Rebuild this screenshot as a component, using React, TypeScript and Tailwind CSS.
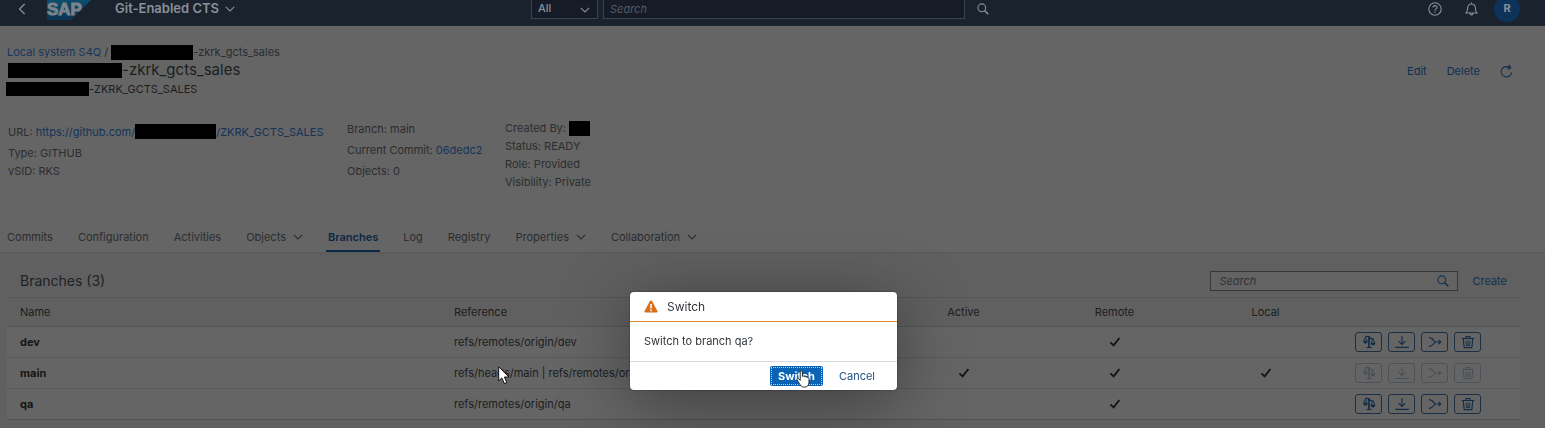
import type { ReactNode } from "react";

function Chevron({ className = "" }: { className?: string }) {
  return (
    <svg width="10" height="6" viewBox="0 0 10 6" fill="none" stroke="currentColor" className={className} aria-hidden="true">
      <path d="M0.8 0.8 L5 5 L9.2 0.8" strokeWidth="1.1" />
    </svg>
  );
}

function SearchIcon() {
  return (
    <svg width="12" height="12" viewBox="0 0 12 12" fill="none" stroke="currentColor" aria-hidden="true">
      <circle cx="4.8" cy="4.8" r="3.9" strokeWidth="1.1" />
      <path d="M7.7 7.7 L11.3 11.2" strokeWidth="1.6" />
    </svg>
  );
}

function SapLogo() {
  return (
    <svg width="47" height="23" viewBox="0 0 47 23" role="img" aria-label="SAP">
      <defs>
        <linearGradient id="sap" x1="0" y1="0" x2="0" y2="1">
          <stop offset="0" stopColor="#0e5070" />
          <stop offset="1" stopColor="#0c3354" />
        </linearGradient>
      </defs>
      <path d="M0 0 H47 L24 23 H0 Z" fill="url(#sap)" />
      <text x="0" y="18" fontFamily="Liberation Sans, sans-serif" fontWeight="700" fontSize="17" fill="#7b838b" stroke="#7b838b" strokeWidth="1">
        SAP
      </text>
    </svg>
  );
}

function Check() {
  return (
    <svg width="12" height="10" viewBox="0 0 12 10" fill="none" stroke="#141516" className="mx-auto" role="img" aria-label="Yes">
      <path d="M1.4 5.4 L4.6 8.4 L10.4 1" strokeWidth="1.9" />
    </svg>
  );
}

function CompareIcon() {
  return (
    <svg width="14" height="14" viewBox="0 0 14 14" fill="none" stroke="currentColor" aria-hidden="true">
      <path d="M7 1 V12.5" strokeWidth="1.7" />
      <path d="M4.6 12.6 H9.8" />
      <path d="M3.2 2 C5 0.8 6.2 1.6 7 2.4 C8 3.6 9.6 3.9 11 3.4" strokeWidth="1.2" />
      <path d="M3.4 2.4 L1.6 6.2 H5.2 Z M11 3.8 L9.2 8 H12.8 Z" strokeWidth="0.9" />
      <path d="M1.2 6.2 V7 Q1.6 8.6 3.4 8.6 Q5.2 8.6 5.6 7 V6.2 Z M8.8 8 V8.8 Q9.2 10.4 11 10.4 Q12.8 10.4 13.2 8.8 V8 Z" fill="currentColor" stroke="none" />
    </svg>
  );
}

function DownloadIcon() {
  return (
    <svg width="14" height="14" viewBox="0 0 14 14" fill="none" stroke="currentColor" aria-hidden="true">
      <path d="M7 1 V9.4 M3.7 6.2 L7 9.5 L10.3 6.2" strokeWidth="1.1" />
      <path d="M0.2 12.4 H13.8" strokeWidth="1.3" />
    </svg>
  );
}

function MergeIcon() {
  return (
    <svg width="14" height="14" viewBox="0 0 14 14" fill="none" stroke="currentColor" strokeWidth="1.1" aria-hidden="true">
      <path d="M1 2.6 C3.4 2.8 5.4 4.6 7 7 C5.4 9.4 3.4 11.2 1 11.4 M7 7 H12.8 M10.6 4.8 L12.9 7 L10.6 9.2" />
    </svg>
  );
}

function TrashIcon() {
  return (
    <svg width="14" height="14" viewBox="0 0 14 14" fill="none" stroke="currentColor" aria-hidden="true">
      <path d="M0.9 3.5 H13.1 M5 3.2 V1.5 H9 V3.2" strokeWidth="1.1" />
      <path d="M2.2 3.8 L3.2 12.6 H10.8 L11.8 3.8" strokeWidth="1.1" />
      <path d="M5 5.6 L5.4 10.6 H8.6 L9 5.6 M7 5.4 V10.6" strokeWidth="0.9" />
    </svg>
  );
}

function Redacted({ className }: { className: string }) {
  return <span aria-hidden="true" className={`inline-block shrink-0 bg-black ${className}`} />;
}

const tabs = [
  { label: "Commits" },
  { label: "Configuration" },
  { label: "Activities" },
  { label: "Objects", menu: true },
  { label: "Branches", active: true },
  { label: "Log" },
  { label: "Registry" },
  { label: "Properties", menu: true },
  { label: "Collaboration", menu: true },
];

const branches = [
  { name: "dev", reference: "refs/remotes/origin/dev", active: false, remote: true, local: false },
  { name: "main", reference: "refs/heads/main | refs/remotes/origin/main", active: true, remote: true, local: true },
  { name: "qa", reference: "refs/remotes/origin/qa", active: false, remote: true, local: false },
];

const actions: { label: string; icon: ReactNode }[] = [
  { label: "Compare", icon: <CompareIcon /> },
  { label: "Pull", icon: <DownloadIcon /> },
  { label: "Merge", icon: <MergeIcon /> },
  { label: "Delete branch", icon: <TrashIcon /> },
];

function ShellBar() {
  return (
    <header className="-mt-[9px] flex h-[35px] items-center bg-[#19222d] text-[#8a9097]">
      <div className="flex flex-1 items-center">
        <button type="button" aria-label="Back" className="ml-[18px] mr-[21px]">
          <svg width="8" height="12" viewBox="0 0 8 12" fill="none" stroke="currentColor" strokeWidth="1.3">
            <path d="M6.6 1 L1.6 6 L6.6 11" />
          </svg>
        </button>
        <SapLogo />
        <button type="button" className="ml-[21px] flex items-center gap-[6px] text-[13px] font-semibold">
          Git-Enabled CTS
          <Chevron />
        </button>
      </div>
      <div className="flex w-[458px] items-center">
        <div className="relative mr-[5px] w-[67px]">
          <select aria-label="Search scope" className="h-5 w-full appearance-none border border-[#3a444f] bg-[#151c27] pl-[6px] text-[11px] font-medium">
            <option>All</option>
          </select>
          <Chevron className="pointer-events-none absolute right-2 top-2" />
        </div>
        <input
          aria-label="Search"
          placeholder="Search"
          className="h-5 w-[362px] border border-[#3a444f] bg-[#151c27] px-[6px] text-[11px] italic placeholder:text-[#525a64]"
        />
        <button type="button" aria-label="Run search" className="ml-3">
          <SearchIcon />
        </button>
      </div>
      <div className="flex flex-1 items-center justify-end pr-[25px]">
        <button type="button" aria-label="Help" className="mr-[23px]">
          <svg width="14" height="14" viewBox="0 0 14 14" fill="none" stroke="currentColor" strokeWidth="1.1">
            <circle cx="7" cy="7" r="6.2" />
            <path d="M5 5.6 C5 3 9 3 9 5.4 C9 7 7 6.8 7 8.5 M7 9.6 V10.8" />
          </svg>
        </button>
        <button type="button" aria-label="Notifications" className="mr-4">
          <svg width="13" height="14" viewBox="0 0 13 14" fill="none" stroke="currentColor" strokeWidth="1.1">
            <path d="M6.5 0.5 V2 M1 11 H12 C10.6 9.8 10.4 8.8 10.4 6.2 C10.4 3.4 8.8 2 6.5 2 C4.2 2 2.6 3.4 2.6 6.2 C2.6 8.8 2.4 9.8 1 11 Z M5 11.4 C5.2 13.4 7.8 13.4 8 11.4" />
          </svg>
        </button>
        <button type="button" className="size-[26px] rounded-full bg-[#0e335b] text-[11px] font-bold">R</button>
      </div>
    </header>
  );
}

function ObjectHeader() {
  return (
    <section className="border-b-2 border-[#5c5c5c] bg-[#656565]">
      <div className="flex justify-between pt-[18px]">
        <div>
          <nav aria-label="Breadcrumb" className="flex h-4 items-center pl-[7px]">
            <a href="#system" className="text-[#17375a]">Local system S4Q</a>
            <span className="mx-[3px]">/</span>
            <Redacted className="h-[15px] w-[82px]" />
            <span>-zkrk_gcts_sales</span>
          </nav>
          <h1 className="flex h-5 items-center pl-2 text-[15px] text-[#1b1d1f]">
            <Redacted className="h-[15px] w-[114px]" />
            -zkrk_gcts_sales
          </h1>
          <p className="flex h-[18px] items-center pl-[6px] text-[#1b1d1f]">
            <Redacted className="h-[14px] w-[83px]" />
            -ZKRK_GCTS_SALES
          </p>
        </div>
        <div className="flex items-center gap-5 pr-8 text-[#10304f]">
          <button type="button">Edit</button>
          <button type="button">Delete</button>
          <button type="button" aria-label="Refresh">
            <svg width="13" height="14" viewBox="0 0 13 14" fill="none" stroke="currentColor" strokeWidth="1.1">
              <path d="M11.6 8.2 A5.2 5.2 0 1 1 9.6 3.6 M6.8 3.8 H10.4 M8.8 0.8 L10.8 3.7 L8 5.6" />
            </svg>
          </button>
        </div>
      </div>
      <div className="flex pl-2 pt-[21px]">
        <div className="w-[339px] leading-[18px]">
          <p className="flex h-[25px] items-center">
            URL:&nbsp;
            <a href="#repository" className="flex items-center text-[#123458]">
              https://github.com/
              <Redacted className="h-[15px] w-[81px]" />
              /ZKRK_GCTS_SALES
            </a>
          </p>
          <p>Type: GITHUB</p>
          <p>vSID: RKS</p>
        </div>
        <div className="w-[158px] leading-[21px]">
          <p>Branch: main</p>
          <p>
            Current Commit: <a href="#commit" className="text-[#123458]">06dedc2</a>
          </p>
          <p>Objects: 0</p>
        </div>
        <div className="leading-[18px]">
          <p className="flex items-center">
            Created By:&nbsp;
            <Redacted className="h-[15px] w-[21px]" />
          </p>
          <p>Status: READY</p>
          <p>Role: Provided</p>
          <p>Visibility: Private</p>
        </div>
      </div>
      <nav aria-label="Sections" className="mt-[33px] flex gap-[25px] pl-[7px]">
        {tabs.map((tab) => (
          <button
            key={tab.label}
            type="button"
            className={
              tab.active
                ? "-mx-[2px] flex h-7 items-center border-b-2 border-[#0b2846] px-[2px] font-semibold text-[#0b2846]"
                : "flex h-7 items-center gap-[7px] border-b-2 border-transparent"
            }
          >
            {tab.label}
            {tab.menu && <Chevron />}
          </button>
        ))}
      </nav>
    </section>
  );
}

function BranchTable() {
  return (
    <section className="pl-[7px] pr-[25px]">
      <div className="flex h-[43px] items-center justify-between pl-[13px] pr-[13px] pt-[11px]">
        <h2 className="text-sm text-[#202224]">Branches (3)</h2>
        <div className="flex items-center gap-[14px]">
          <div className="flex h-5 w-[248px] items-center border border-[#35383b] bg-[#636363] px-2">
            <input
              aria-label="Search branches"
              placeholder="Search"
              className="min-w-0 flex-1 bg-transparent italic placeholder:text-[#303234]"
            />
            <button type="button" aria-label="Search" className="text-[#10304f]">
              <SearchIcon />
            </button>
          </div>
          <button type="button" className="text-[#10304f]">Create</button>
        </div>
      </div>
      <table className="w-full table-fixed border-collapse text-[#1b1d1f]">
        <colgroup>
          <col className="w-[434px]" />
          <col />
          <col className="w-[151px]" />
          <col className="w-[151px]" />
          <col className="w-[151px]" />
          <col className="w-[179px]" />
        </colgroup>
        <thead>
          <tr className="h-[29px] border-y border-[#565656] bg-[#606060]">
            <th scope="col" className="pl-[13px] text-left font-normal">Name</th>
            <th scope="col" className="pl-[13px] text-left font-normal">Reference</th>
            <th scope="col" className="font-normal">Active</th>
            <th scope="col" className="font-normal">Remote</th>
            <th scope="col" className="font-normal">Local</th>
            <td />
          </tr>
        </thead>
        <tbody>
          {branches.map((branch) => (
            <tr key={branch.name} className="h-[31px] border-b border-[#5a5a5a] bg-[#656565] last:border-[#505050]">
              <td className="pl-[13px] font-bold text-[#141516]">{branch.name}</td>
              <td className="truncate pl-[13px]">{branch.reference}</td>
              <td>{branch.active && <Check />}</td>
              <td>{branch.remote && <Check />}</td>
              <td>{branch.local && <Check />}</td>
              <td>
                <div className="flex gap-[6px] pl-[14px]">
                  {actions.map((action) => (
                    <button
                      key={action.label}
                      type="button"
                      aria-label={action.label}
                      disabled={branch.active}
                      className="flex h-5 w-[27px] items-center justify-center rounded-[3px] border border-[#1c3045] text-[#122c46] disabled:border-[#4c5257] disabled:text-[#495057]"
                    >
                      {action.icon}
                    </button>
                  ))}
                </div>
              </td>
            </tr>
          ))}
        </tbody>
      </table>
    </section>
  );
}

function SwitchDialog() {
  return (
    <div className="fixed inset-0 flex items-start justify-center pr-[19px] pt-[292px]">
      <div
        role="alertdialog"
        aria-labelledby="dialog-title"
        className="w-[267px] rounded-[4px] bg-white text-[#32363a] shadow-[0_0_2px_rgba(0,0,0,0.5),0_12px_70px_rgba(0,0,0,0.4)]"
      >
        <div className="flex h-[30px] items-center gap-[9px] border-b border-[#e08a30] pl-[14px]">
          <svg width="14" height="13" viewBox="0 0 14 13" aria-hidden="true">
            <path d="M7 0.4 C7.6 0.4 7.9 0.8 8.2 1.3 L13.4 11 C13.8 11.8 13.4 12.6 12.5 12.6 H1.5 C0.6 12.6 0.2 11.8 0.6 11 L5.8 1.3 C6.1 0.8 6.4 0.4 7 0.4 Z" fill="#d76f1b" />
            <path d="M7 4 V8.4 M7 9.6 V11.2" stroke="#fff" strokeWidth="1.5" />
          </svg>
          <h2 id="dialog-title" className="text-xs">Switch</h2>
        </div>
        <p className="flex h-10 items-center border-b border-[#d9d9d9] px-[14px]">Switch to branch qa?</p>
        <div className="flex h-7 items-center justify-end gap-4 pr-[22px]">
          <button type="button" className="h-5 w-[53px] rounded-[2px] bg-[#0a63b5] p-px font-bold text-white">
            <span className="flex h-full items-center justify-center border border-dotted border-white/70">Switch</span>
          </button>
          <button type="button" className="text-[#1e4f82]">Cancel</button>
        </div>
      </div>
    </div>
  );
}

function Pointers() {
  return (
    <>
      <svg width="12" height="19" viewBox="0 0 12 19" className="pointer-events-none fixed left-[498px] top-[366px]" aria-hidden="true">
        <path d="M0.7 0.8 V14.8 L3.9 11.9 L6.4 17.6 L8.8 16.6 L6.4 11 H10.9 Z" fill="#fff" stroke="#000" strokeWidth="0.9" />
      </svg>
      <svg width="15" height="18" viewBox="0 0 15 18" className="pointer-events-none fixed left-[796px] top-[370px]" aria-hidden="true">
        <path
          d="M4.2 1.8 C4.2 0.5 6.4 0.5 6.4 1.8 V6.4 C7 5.7 8.4 5.9 8.6 6.8 C9.3 6.1 10.8 6.5 10.9 7.5 C11.7 7 13 7.4 13 8.6 V12 C13 15 11.4 17.2 8.4 17.2 C5.6 17.2 4.6 15.6 3.4 13.6 L1 9.9 C0.5 8.8 1.9 8 2.8 8.9 L4.2 10.4 Z"
          fill="#fff"
          stroke="#1a1a1a"
          strokeWidth="0.9"
        />
      </svg>
    </>
  );
}

export default function App() {
  return (
    <div className="flow-root min-h-screen overflow-hidden border-r border-white bg-[#606060] font-['Inter','Liberation_Sans',sans-serif] text-[11px] text-[#2b2d2f]">
      <ShellBar />
      <ObjectHeader />
      <BranchTable />
      <SwitchDialog />
      <Pointers />
    </div>
  );
}
